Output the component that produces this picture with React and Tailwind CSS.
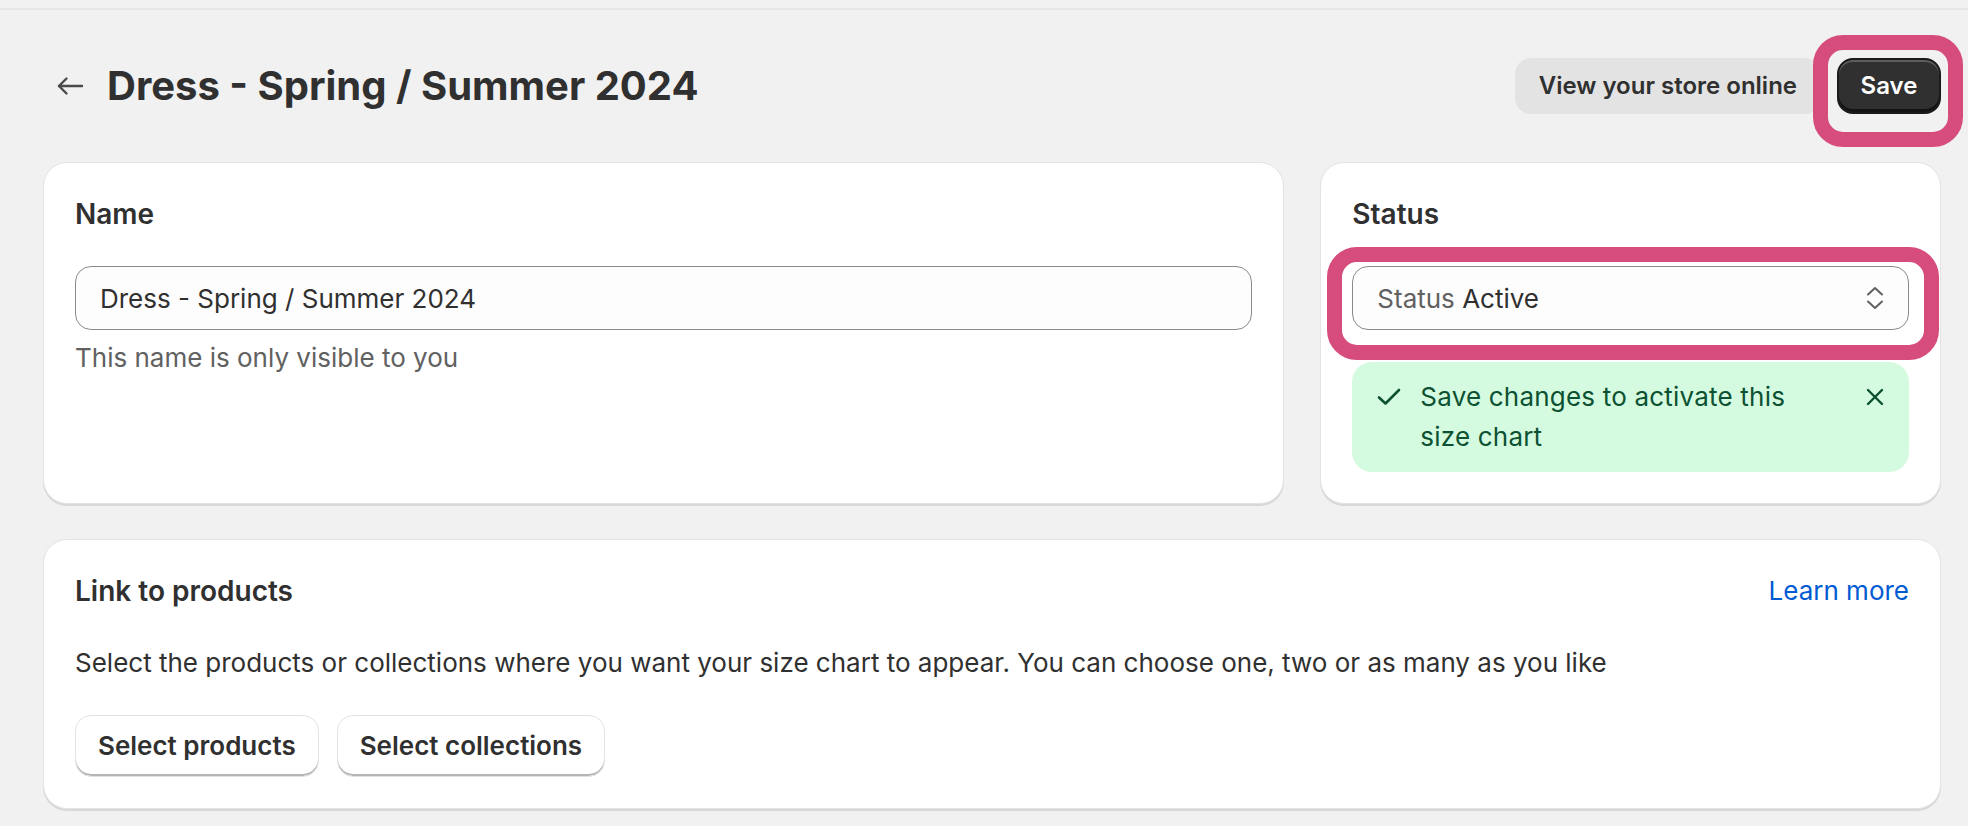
import React from "react";

function ArrowLeft() {
  return (
    <svg width="28" height="20" viewBox="0 0 28 20" fill="none" stroke="#4a4a4a" strokeWidth="2.4" strokeLinecap="round" strokeLinejoin="round">
      <path d="M26 10H3" />
      <path d="M10.5 2.5L3 10l7.5 7.5" />
    </svg>
  );
}

function Chevrons() {
  return (
    <svg width="20" height="26" viewBox="0 0 20 26" fill="none" stroke="#616161" strokeWidth="2" strokeLinecap="round" strokeLinejoin="round">
      <path d="M3 9.5L10 3l7 6.5" />
      <path d="M3 16.5L10 23l7-6.5" />
    </svg>
  );
}

function Check() {
  return (
    <svg width="24" height="18" viewBox="0 0 24 18" fill="none" stroke="#0c5132" strokeWidth="2.6" strokeLinecap="round" strokeLinejoin="round">
      <path d="M2 9.5l6.5 6L22 2" />
    </svg>
  );
}

function Close() {
  return (
    <svg width="18" height="18" viewBox="0 0 18 18" fill="none" stroke="#0c5132" strokeWidth="2.4" strokeLinecap="round">
      <path d="M2 2l14 14" />
      <path d="M16 2L2 16" />
    </svg>
  );
}

export default function App() {
  return (
    <div className="min-h-screen w-[1968px] bg-[#f1f1f1] font-['Inter',_'Noto_Sans',_sans-serif] text-[#303030] antialiased">
      <div className="h-2" />
      <div className="border-t-2 border-[#e6e6e6]" />
      <div className="pl-[43px] pr-[27px]">
        {/* Header */}
        <div className="flex items-center justify-between py-12">
          <div className="flex h-14 items-center">
            <div className="ml-[13px] flex w-[28px] items-center">
              <ArrowLeft />
            </div>
            <h1 className="ml-[23px] text-[40px] font-bold leading-[56px] text-[#303030]">
              Dress - Spring / Summer 2024
            </h1>
          </div>
          <div className="flex items-center gap-4">
            <button className="h-14 rounded-2xl bg-[#e3e3e3] px-6 text-[24px] font-semibold leading-none text-[#303030]">
              View your store online
            </button>
            <div className="relative">
              <button className="h-14 w-[104px] rounded-2xl border-2 border-[#1a1a1a] bg-[#303030] text-[24px] font-semibold leading-none text-white shadow-[inset_0_2px_0_0_rgba(255,255,255,0.22),inset_0_-3px_0_0_rgba(0,0,0,0.6)]">
                Save
              </button>
              <div className="pointer-events-none absolute left-[-24px] right-[-22px] top-[-23px] bottom-[-33px] rounded-[30px] border-[15px] border-[#d54c7d]" />
            </div>
          </div>
        </div>

        {/* Row 1 */}
        <div className="grid grid-cols-[2fr_1fr] gap-9">
          <div className="rounded-[24px] border border-[#e3e3e3] bg-white p-[31px] shadow-[0_2px_0_0_rgba(0,0,0,0.1)]">
            <div className="text-[28px] font-semibold leading-[40px]">Name</div>
            <div className="mt-8 flex h-16 items-center rounded-2xl border-[1.5px] border-[#8a8a8a] bg-[#fdfdfd] px-6 text-[26px]">
              Dress - Spring / Summer 2024
            </div>
            <div className="mt-2 text-[26px] leading-[40px] text-[#616161]">
              This name is only visible to you
            </div>
          </div>

          <div className="rounded-[24px] border border-[#e3e3e3] bg-white p-[31px] shadow-[0_2px_0_0_rgba(0,0,0,0.1)]">
            <div className="text-[28px] font-semibold leading-[40px]">Status</div>
            <div className="relative mt-8">
              <div className="flex h-16 items-center justify-between rounded-2xl border-[1.5px] border-[#8a8a8a] bg-[#fdfdfd] pl-6 pr-[23px] text-[26px]">
                <span>
                  <span className="text-[#616161]">Status</span> Active
                </span>
                <Chevrons />
              </div>
              <div className="pointer-events-none absolute left-[-25px] right-[-30px] top-[-19px] bottom-[-30px] rounded-[30px] border-[15px] border-[#d54c7d]" />
            </div>
            <div className="mt-8 flex rounded-[20px] bg-[#d4fbe0] pb-[15px] pl-[25px] pr-[25px] pt-[15px] text-[26px] leading-[40px] text-[#0c5132]">
              <div className="flex h-10 w-[24px] items-center">
                <Check />
              </div>
              <div className="ml-[19px] flex-1 tracking-[0.2px]">
                Save changes to activate this
                <br />
                size chart
              </div>
              <div className="flex h-10 items-center">
                <Close />
              </div>
            </div>
          </div>
        </div>

        {/* Link card */}
        <div className="mt-[35px] rounded-[24px] border border-[#e3e3e3] bg-white p-[31px] shadow-[0_2px_0_0_rgba(0,0,0,0.1)]">
          <div className="flex items-center justify-between">
            <div className="text-[28px] font-semibold leading-[40px]">Link to products</div>
            <a className="text-[26px] leading-[40px] text-[#005bd3]">Learn more</a>
          </div>
          <p className="mt-8 text-[26px] leading-[40px]">
            Select the products or collections where you want your size chart to appear. You can choose one, two or as many as you like
          </p>
          <div className="mt-8 flex gap-[18px]">
            <button className="h-[62px] rounded-2xl border border-[#e3e3e3] bg-white px-[22px] text-[26px] font-semibold leading-none text-[#303030] shadow-[inset_0_-2px_0_0_#b5b5b5]">
              Select products
            </button>
            <button className="h-[62px] rounded-2xl border border-[#e3e3e3] bg-white px-[22px] text-[26px] font-semibold leading-none text-[#303030] shadow-[inset_0_-2px_0_0_#b5b5b5]">
              Select collections
            </button>
          </div>
        </div>
      </div>
    </div>
  );
}
